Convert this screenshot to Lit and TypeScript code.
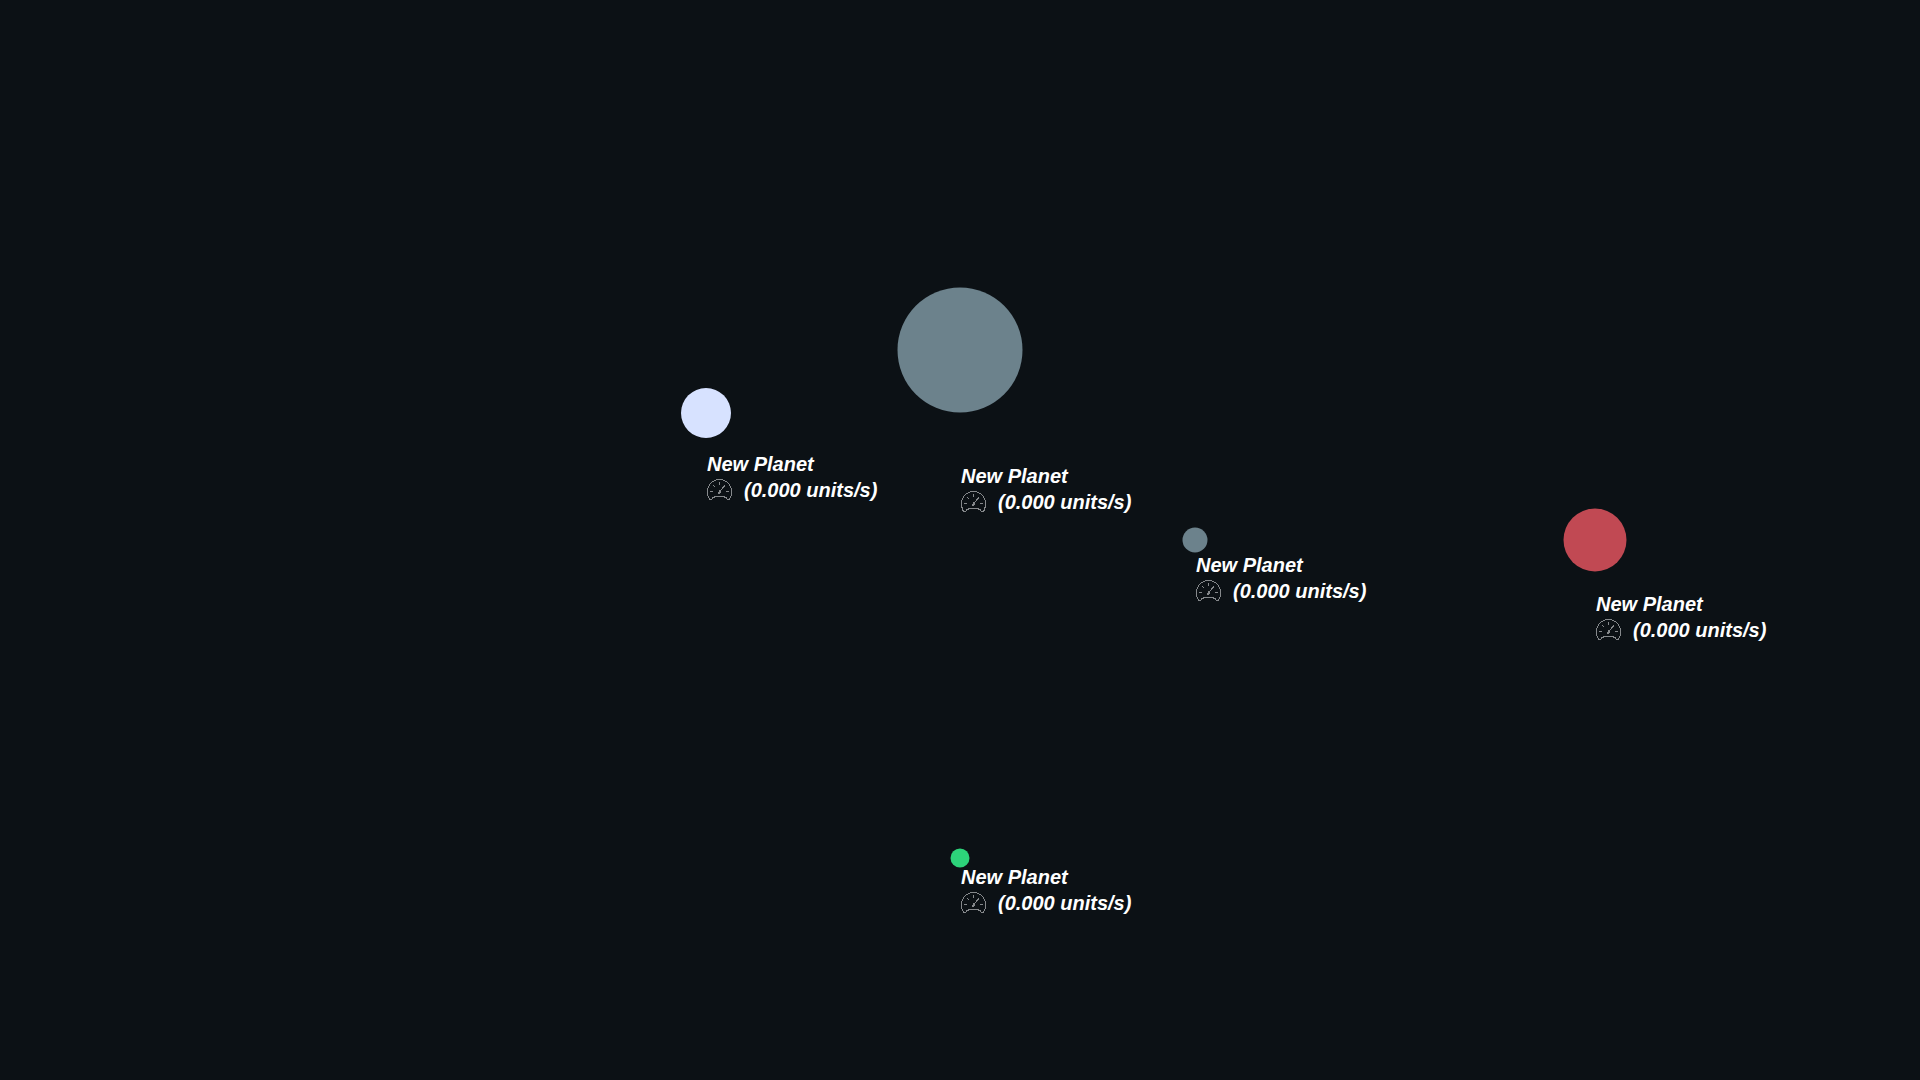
import { LitElement, html, css } from "lit";
import { customElement, property } from "lit/decorators.js";
import { styleMap } from "lit/directives/style-map.js";

interface Planet {
  name: string;
  /* Centre, measured from the middle of the scene. */
  x: number;
  y: number;
  size: number;
  color: string;
  /* Distance from the centre down to the label. */
  drop: number;
  speed: number;
}

const PLANETS: Planet[] = [
  { name: "New Planet", x: 0, y: -190, size: 125, color: "#6c828c", drop: 113, speed: 0 },
  { name: "New Planet", x: -254, y: -127, size: 50, color: "#d7e2ff", drop: 38, speed: 0 },
  { name: "New Planet", x: 235, y: 0, size: 25, color: "#6c828c", drop: 12, speed: 0 },
  { name: "New Planet", x: 635, y: 0, size: 63, color: "#c14953", drop: 51, speed: 0 },
  { name: "New Planet", x: 0, y: 318, size: 19, color: "#2dd37a", drop: 6, speed: 0 },
];

@customElement("planet-label")
export class PlanetLabel extends LitElement {
  @property() name = "";
  @property({ type: Number }) speed = 0;

  static styles = css`
    :host {
      display: flex;
      flex-direction: column;
      color: #ffffff;
      font: italic bold 20px/26px "Liberation Sans", Arial, sans-serif;
      white-space: nowrap;
    }
    .speed {
      display: flex;
      align-items: center;
      gap: 12px;
    }
    .gauge {
      flex: none;
      width: 25px;
      height: 22px;
      fill: none;
      stroke: #85888b;
      stroke-width: 1;
      shape-rendering: crispEdges;
    }
    .hub {
      fill: #85888b;
      stroke: none;
    }
  `;

  render() {
    return html`
      <span>${this.name}</span>
      <span class="speed">
        <svg class="gauge" viewBox="0 0 25 22" aria-hidden="true">
          <path
            d="M2.5 20.5C1.2 18.2 .5 15.8 .5 12.5A12 12 0 0 1 24.5 12.5C24.5 15.8 23.8 18.2 22.5 20.5H20.5L19.5 19L16.5 17.5H8.5L5.5 19L4.5 20.5Z"
          />
          <path d="M12.5 3V6M6 6L8 8M3 12.5H6M19 12.5H22M13 12L18 6.5" />
          <path class="hub" d="M11 14L12 11.500L14.500 10.500L14 13L12.500 14.500H11Z" />
        </svg>
        <span>(${this.speed.toFixed(3)} units/s)</span>
      </span>
    `;
  }
}

@customElement("app-root")
export class AppRoot extends LitElement {
  static styles = css`
    :host {
      display: block;
    }
    .scene {
      position: relative;
      height: 100vh;
      overflow: hidden;
      background: #0c1115;
    }
    .planet {
      position: absolute;
      width: 0;
      height: 0;
    }
    .body {
      position: absolute;
      border-radius: 50%;
      transform: translate(-50%, -50%);
    }
    .label {
      position: absolute;
      left: 1px;
    }
  `;

  render() {
    return html`
      <main class="scene">
        ${PLANETS.map(
          (p) => html`
            <div
              class="planet"
              style=${styleMap({ left: `calc(50% + ${p.x}px)`, top: `calc(50% + ${p.y}px)` })}
            >
              <div
                class="body"
                style=${styleMap({ width: `${p.size}px`, height: `${p.size}px`, background: p.color })}
              ></div>
              <planet-label
                class="label"
                style=${styleMap({ top: `${p.drop}px` })}
                .name=${p.name}
                .speed=${p.speed}
              ></planet-label>
            </div>
          `
        )}
      </main>
    `;
  }
}
